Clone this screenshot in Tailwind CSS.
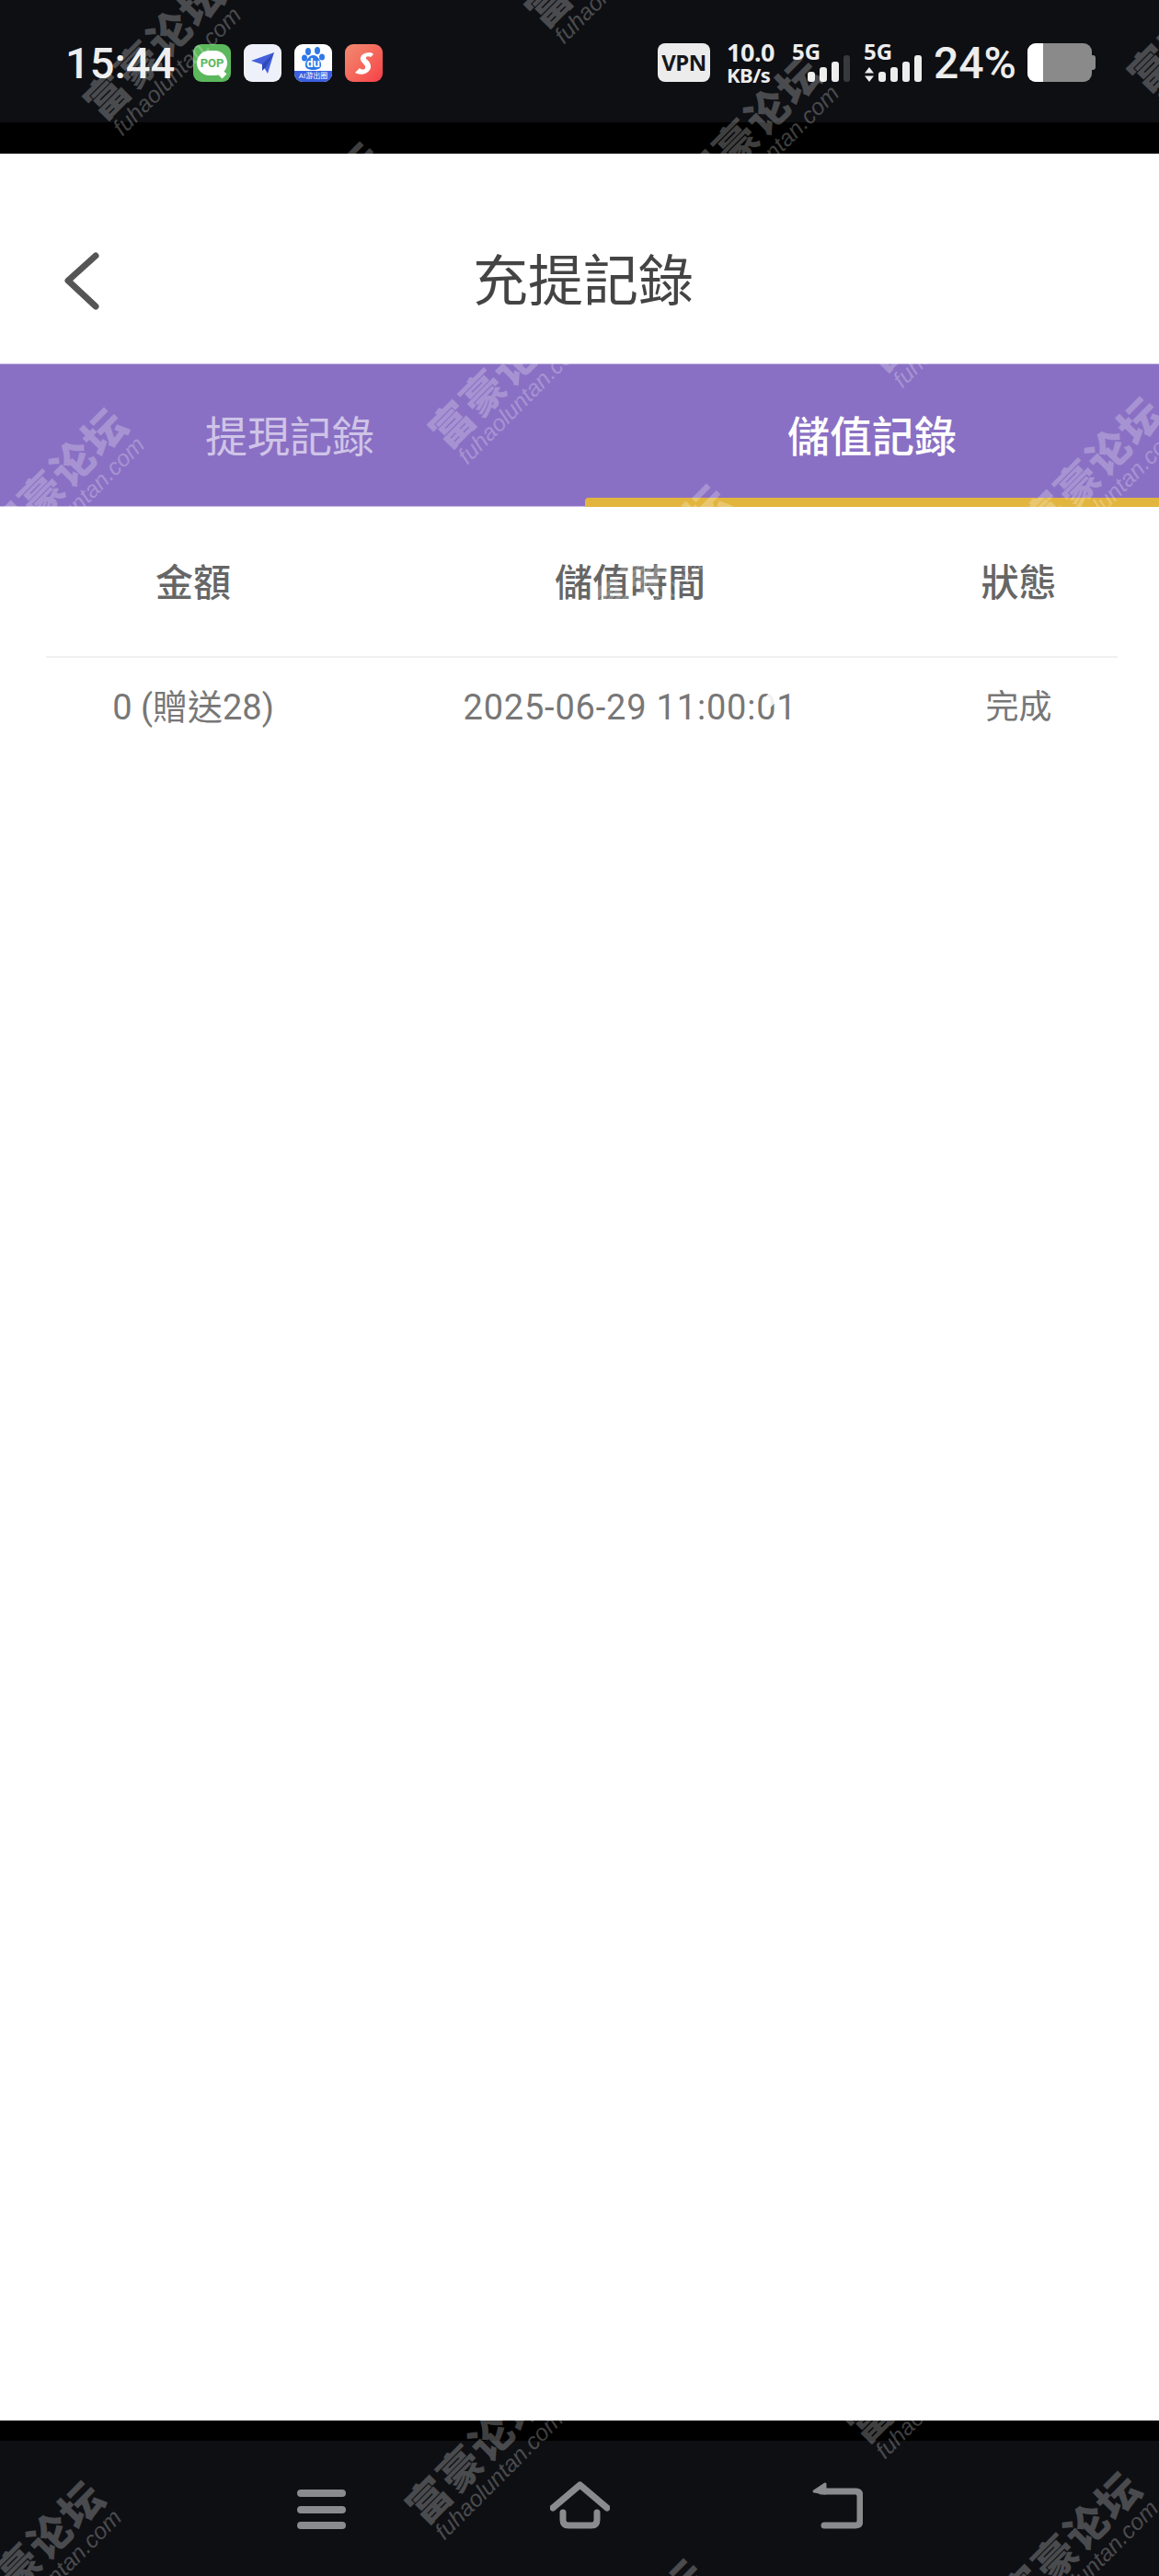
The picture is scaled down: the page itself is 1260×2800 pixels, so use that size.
<!DOCTYPE html>
<html lang="zh-Hant">
<head>
  <meta charset="UTF-8">
  <meta name="viewport" content="width=device-width, initial-scale=1.0">
  <title>充提記錄</title>
  <script src="https://cdn.jsdelivr.net/npm/@tailwindcss/browser@4"></script>
</head>
<body class="bg-white font-['Roboto','Noto_Sans_CJK_TC',sans-serif]">
  <div class="relative flex h-[2800px] w-[1260px] flex-col overflow-hidden bg-white">

    <!-- Status bar -->
    <div class="flex h-[133px] shrink-0 items-start bg-[#0e0f13] pl-[71px] pt-[47px] text-[#ededed]">
      <span class="w-[120px] text-[47px] font-medium leading-[44px]">15:44</span>
      <div class="ml-[19px] mt-[1px] flex gap-[14px]">
        <div class="flex h-[41px] w-[41px] items-center justify-center rounded-[9px] bg-[#5cb85c]">
          <div class="relative flex h-[27px] w-[33px] items-center justify-center rounded-[14px] bg-white">
            <span class="text-[13px] font-bold leading-none text-[#5cb85c]">POP</span>
            <div class="absolute bottom-[-2px] right-[2px] h-[7px] w-[7px] rotate-45 bg-white"></div>
          </div>
        </div>
        <div class="flex h-[41px] w-[41px] items-center justify-center rounded-[9px] bg-[#eff1fa]">
          <svg width="27" height="27" viewBox="0 0 27 27"><path d="M1 11 L26 2 L19 25 L13 15 Z" fill="#4460dc"/><path d="M26 2 L13 15 L13 22 L17 18 Z" fill="#3048b8"/></svg>
        </div>
        <div class="relative flex h-[41px] w-[41px] flex-col items-center overflow-hidden rounded-[9px] bg-white">
          <svg class="mt-[3px]" width="26" height="26" viewBox="0 0 26 26">
            <ellipse cx="7" cy="5" rx="3" ry="4" fill="#2f78e8"/><ellipse cx="17" cy="4" rx="3" ry="4" fill="#2f78e8"/>
            <ellipse cx="3" cy="12" rx="3" ry="3.5" fill="#2f78e8"/><ellipse cx="22" cy="11" rx="3" ry="3.5" fill="#2f78e8"/>
            <path d="M12.5 9 C17 9 20 14 21 18 C22 23 18 25 12.5 25 C7 25 3 23 4 18 C5 14 8 9 12.5 9 Z" fill="#2f78e8"/>
          </svg>
          <span class="absolute top-[14px] text-[13px] font-bold leading-[13px] text-white">du</span>
          <div class="absolute bottom-0 flex h-[12px] w-full items-center justify-center bg-[#3a5fe0]">
            <span class="whitespace-nowrap text-[8px] leading-none text-white">AI游出圈</span>
          </div>
        </div>
        <div class="flex h-[41px] w-[41px] items-center justify-center rounded-[9px] bg-gradient-to-br from-[#f08a70] to-[#f63c48]">
          <svg width="25" height="27" viewBox="0 0 25 27"><path d="M19 2 C12 2 8 6 9 10 C10 14 15 15 14 19 C13 21 10 21 8 19 L3 24 C8 27 16 26 19 21 C22 16 18 11 15 9 C14 7 16 5 20 7 L23 4 C22 3 21 2 19 2 Z" fill="#fff"/></svg>
        </div>
      </div>

      <div class="ml-[299px] flex h-[42px] w-[57px] items-center justify-center rounded-[8px] bg-[#ececec]">
        <span class="font-['Noto_Sans'] text-[24px] font-bold leading-none tracking-[-0.5px] text-[#15161a]">VPN</span>
      </div>
      <div class="ml-[18px] flex w-[55px] flex-col font-['Noto_Sans'] font-bold">
        <span class="h-[25px] text-[27px] leading-[20px] tracking-[-0.5px]">10.0</span>
        <span class="text-[22px] leading-[18px] tracking-[-0.5px]">KB/s</span>
      </div>

      <!-- SIM 1 -->
      <div class="ml-[16px] h-[42px] w-[67px] font-['Noto_Sans'] text-[24px] font-bold leading-[17px]">
        5G
        <div class="mt-[-4px] flex h-[29px] items-end gap-[5px] pl-[17px]">
          <div class="h-[11px] w-[8px] rounded-[3px] bg-[#ededed]"></div>
          <div class="h-[16px] w-[8px] rounded-[3px] bg-[#ededed]"></div>
          <div class="h-[22px] w-[8px] rounded-[3px] bg-[#ededed]"></div>
          <div class="h-[29px] w-[7px] rounded-[3px] bg-[#38393d]"></div>
        </div>
      </div>

      <!-- SIM 2 -->
      <div class="ml-[11px] h-[42px] w-[64px] font-['Noto_Sans'] text-[24px] font-bold leading-[17px]">
        5G
        <div class="mt-[-4px] flex h-[29px] items-end">
          <svg class="mb-0 ml-[1px] mr-[5px]" width="10" height="16" viewBox="0 0 10 16"><path d="M5 0 L10 6.500 L0 6.500 Z M0 9.500 L10 9.500 L5 16 Z" fill="#ededed"/></svg>
          <div class="flex items-end gap-[5px]">
            <div class="h-[11px] w-[8px] rounded-[3px] bg-[#ededed]"></div>
            <div class="h-[16px] w-[8px] rounded-[3px] bg-[#ededed]"></div>
            <div class="h-[22px] w-[8px] rounded-[3px] bg-[#ededed]"></div>
            <div class="h-[29px] w-[8px] rounded-[3px] bg-[#ededed]"></div>
          </div>
        </div>
      </div>

      <span class="ml-[12px] mt-[1px] w-[102px] text-[48px] font-medium leading-[42px]">24%</span>

      <!-- Battery -->
      <div class="flex h-[42px] items-center">
        <div class="flex h-[42px] w-[70px] overflow-hidden rounded-[9px] bg-[#8a8a8a]">
          <div class="h-full w-[17px] bg-white"></div>
        </div>
        <div class="h-[16px] w-[4px] rounded-r-[3px] bg-[#8a8a8a]"></div>
      </div>
    </div>
    <div class="h-[34px] shrink-0 bg-black"></div>

    <!-- Title bar -->
    <div class="flex h-[228px] shrink-0 items-center pl-[66px] pt-[48px]">
      <svg width="44" height="66" viewBox="0 0 44 66" fill="none"><path d="M38 6 L8 33 L38 61" stroke="#555" stroke-width="7" stroke-linecap="round" stroke-linejoin="round"/></svg>
      <h1 class="ml-[404px] mt-[4px] text-[60px] font-normal leading-none text-[#444]">充提記錄</h1>
    </div>

    <!-- Tabs -->
    <div class="flex h-[156px] shrink-0 border-y border-[#c9bce6] bg-[#8a70c4]">
      <div class="flex w-[636px] items-center justify-center pt-[4px] text-[46px] text-white/60">
        <span class="mr-[6px]">提現記錄</span>
      </div>
      <div class="relative flex flex-1 items-center justify-center pt-[4px] text-[46px] font-medium text-white">
        <span>儲值記錄</span>
        <div class="absolute inset-x-0 bottom-[-1px] h-[10px] rounded-tl-[4px] bg-[#e2b53f]"></div>
      </div>
    </div>

    <!-- Records table -->
    <div class="mx-[50px] grid w-[1165px] grid-cols-[320px_630px_215px] text-center">
      <div class="flex h-[164px] items-center justify-center border-b-2 border-[#f0f0f0] pt-[6px] text-[41px] font-medium text-[#666]">金額</div>
      <div class="flex h-[164px] items-center justify-center border-b-2 border-[#f0f0f0] pt-[6px] text-[41px] font-medium text-[#666]">儲值時間</div>
      <div class="flex h-[164px] items-center justify-center border-b-2 border-[#f0f0f0] pt-[6px] text-[41px] font-medium text-[#666]">狀態</div>
      <div class="flex h-[106px] items-center justify-center pt-[2px] text-[38px] text-[#777]">0 (贈送28)</div>
      <div class="relative flex h-[106px] items-center justify-center pt-[2px] text-[38px] tracking-[0.8px] text-[#777]">
        2025-06-29 11:00:01
        <div class="absolute left-[462px] top-[38px] h-[14px] w-[12px] rotate-45 bg-white/90"></div>
      </div>
      <div class="flex h-[106px] items-center justify-center pt-[2px] text-[36px] text-[#777]">完成</div>
    </div>

    <div class="flex-1"></div>

    <!-- Navigation bar -->
    <div class="h-[22px] shrink-0 bg-black"></div>
    <div class="flex h-[147px] shrink-0 items-start bg-[#0e0f13] pl-[323px] pt-[44px]">
      <svg width="53" height="52" viewBox="0 0 53 52" fill="#8a8b8d">
        <rect y="9" width="53" height="8" rx="4"/><rect y="27" width="53" height="8" rx="4"/><rect y="44" width="53" height="8" rx="4"/>
      </svg>
      <svg class="ml-[222px]" width="65" height="52" viewBox="0 0 65 52" fill="none" stroke="#8a8b8d" stroke-width="7" stroke-linecap="round" stroke-linejoin="round">
        <path d="M3 29 L32.500 4 L62 29"/>
        <path d="M14 34 L14 42 Q14 48 20 48 L45 48 Q51 48 51 42 L51 34"/>
      </svg>
      <svg class="ml-[219px]" width="56" height="52" viewBox="0 0 56 52" fill="none" stroke="#8a8b8d" stroke-width="7" stroke-linecap="round" stroke-linejoin="round">
        <path d="M11 11 L48 11 Q53 11 53 16 L53 43 Q53 48 48 48 L14 48"/>
        <path d="M15 3 L3 11 L15 13 Z" fill="#8a8b8d" stroke-width="3"/>
      </svg>
    </div>

    <!-- Watermarks, white so they only show on the dark and purple bars -->
    <div class="pointer-events-none absolute inset-0 overflow-hidden text-white/25">
      <div class="absolute left-[175px] top-[60px] flex w-[240px] -translate-x-1/2 -translate-y-1/2 -rotate-45 flex-col items-center">
        <span class="whitespace-nowrap font-['Noto_Sans_CJK_SC'] text-[46px] font-black leading-[48px] tracking-[2px]">富豪论坛</span>
        <span class="whitespace-nowrap font-['Liberation_Sans'] text-[25px] italic leading-[26px]">fuhaoluntan.com</span>
      </div>
      <div class="absolute left-[655px] top-[-40px] flex w-[240px] -translate-x-1/2 -translate-y-1/2 -rotate-45 flex-col items-center">
        <span class="whitespace-nowrap font-['Noto_Sans_CJK_SC'] text-[46px] font-black leading-[48px] tracking-[2px]">富豪论坛</span>
        <span class="whitespace-nowrap font-['Liberation_Sans'] text-[25px] italic leading-[26px]">fuhaoluntan.com</span>
      </div>
      <div class="absolute left-[825px] top-[145px] flex w-[240px] -translate-x-1/2 -translate-y-1/2 -rotate-45 flex-col items-center">
        <span class="whitespace-nowrap font-['Noto_Sans_CJK_SC'] text-[46px] font-black leading-[48px] tracking-[2px]">富豪论坛</span>
        <span class="whitespace-nowrap font-['Liberation_Sans'] text-[25px] italic leading-[26px]">fuhaoluntan.com</span>
      </div>
      <div class="absolute left-[1310px] top-[30px] flex w-[240px] -translate-x-1/2 -translate-y-1/2 -rotate-45 flex-col items-center">
        <span class="whitespace-nowrap font-['Noto_Sans_CJK_SC'] text-[46px] font-black leading-[48px] tracking-[2px]">富豪论坛</span>
        <span class="whitespace-nowrap font-['Liberation_Sans'] text-[25px] italic leading-[26px]">fuhaoluntan.com</span>
      </div>
      <div class="absolute left-[348px] top-[238px] flex w-[240px] -translate-x-1/2 -translate-y-1/2 -rotate-45 flex-col items-center">
        <span class="whitespace-nowrap font-['Noto_Sans_CJK_SC'] text-[46px] font-black leading-[48px] tracking-[2px]">富豪论坛</span>
        <span class="whitespace-nowrap font-['Liberation_Sans'] text-[25px] italic leading-[26px]">fuhaoluntan.com</span>
      </div>
      <div class="absolute left-[70px] top-[527px] flex w-[240px] -translate-x-1/2 -translate-y-1/2 -rotate-45 flex-col items-center">
        <span class="whitespace-nowrap font-['Noto_Sans_CJK_SC'] text-[46px] font-black leading-[48px] tracking-[2px]">富豪论坛</span>
        <span class="whitespace-nowrap font-['Liberation_Sans'] text-[25px] italic leading-[26px]">fuhaoluntan.com</span>
      </div>
      <div class="absolute left-[550px] top-[417px] flex w-[240px] -translate-x-1/2 -translate-y-1/2 -rotate-45 flex-col items-center">
        <span class="whitespace-nowrap font-['Noto_Sans_CJK_SC'] text-[46px] font-black leading-[48px] tracking-[2px]">富豪论坛</span>
        <span class="whitespace-nowrap font-['Liberation_Sans'] text-[25px] italic leading-[26px]">fuhaoluntan.com</span>
      </div>
      <div class="absolute left-[1023px] top-[334px] flex w-[240px] -translate-x-1/2 -translate-y-1/2 -rotate-45 flex-col items-center">
        <span class="whitespace-nowrap font-['Noto_Sans_CJK_SC'] text-[46px] font-black leading-[48px] tracking-[2px]">富豪论坛</span>
        <span class="whitespace-nowrap font-['Liberation_Sans'] text-[25px] italic leading-[26px]">fuhaoluntan.com</span>
      </div>
      <div class="absolute left-[1196px] top-[515px] flex w-[240px] -translate-x-1/2 -translate-y-1/2 -rotate-45 flex-col items-center">
        <span class="whitespace-nowrap font-['Noto_Sans_CJK_SC'] text-[46px] font-black leading-[48px] tracking-[2px]">富豪论坛</span>
        <span class="whitespace-nowrap font-['Liberation_Sans'] text-[25px] italic leading-[26px]">fuhaoluntan.com</span>
      </div>
      <div class="absolute left-[725px] top-[610px] flex w-[240px] -translate-x-1/2 -translate-y-1/2 -rotate-45 flex-col items-center">
        <span class="whitespace-nowrap font-['Noto_Sans_CJK_SC'] text-[46px] font-black leading-[48px] tracking-[2px]">富豪论坛</span>
        <span class="whitespace-nowrap font-['Liberation_Sans'] text-[25px] italic leading-[26px]">fuhaoluntan.com</span>
      </div>
      <div class="absolute left-[45px] top-[2780px] flex w-[240px] -translate-x-1/2 -translate-y-1/2 -rotate-45 flex-col items-center">
        <span class="whitespace-nowrap font-['Noto_Sans_CJK_SC'] text-[46px] font-black leading-[48px] tracking-[2px]">富豪论坛</span>
        <span class="whitespace-nowrap font-['Liberation_Sans'] text-[25px] italic leading-[26px]">fuhaoluntan.com</span>
      </div>
      <div class="absolute left-[525px] top-[2673px] flex w-[240px] -translate-x-1/2 -translate-y-1/2 -rotate-45 flex-col items-center">
        <span class="whitespace-nowrap font-['Noto_Sans_CJK_SC'] text-[46px] font-black leading-[48px] tracking-[2px]">富豪论坛</span>
        <span class="whitespace-nowrap font-['Liberation_Sans'] text-[25px] italic leading-[26px]">fuhaoluntan.com</span>
      </div>
      <div class="absolute left-[1004px] top-[2585px] flex w-[240px] -translate-x-1/2 -translate-y-1/2 -rotate-45 flex-col items-center">
        <span class="whitespace-nowrap font-['Noto_Sans_CJK_SC'] text-[46px] font-black leading-[48px] tracking-[2px]">富豪论坛</span>
        <span class="whitespace-nowrap font-['Liberation_Sans'] text-[25px] italic leading-[26px]">fuhaoluntan.com</span>
      </div>
      <div class="absolute left-[700px] top-[2865px] flex w-[240px] -translate-x-1/2 -translate-y-1/2 -rotate-45 flex-col items-center">
        <span class="whitespace-nowrap font-['Noto_Sans_CJK_SC'] text-[46px] font-black leading-[48px] tracking-[2px]">富豪论坛</span>
        <span class="whitespace-nowrap font-['Liberation_Sans'] text-[25px] italic leading-[26px]">fuhaoluntan.com</span>
      </div>
      <div class="absolute left-[1172px] top-[2770px] flex w-[240px] -translate-x-1/2 -translate-y-1/2 -rotate-45 flex-col items-center">
        <span class="whitespace-nowrap font-['Noto_Sans_CJK_SC'] text-[46px] font-black leading-[48px] tracking-[2px]">富豪论坛</span>
        <span class="whitespace-nowrap font-['Liberation_Sans'] text-[25px] italic leading-[26px]">fuhaoluntan.com</span>
      </div>
    </div>
  </div>
</body>
</html>
